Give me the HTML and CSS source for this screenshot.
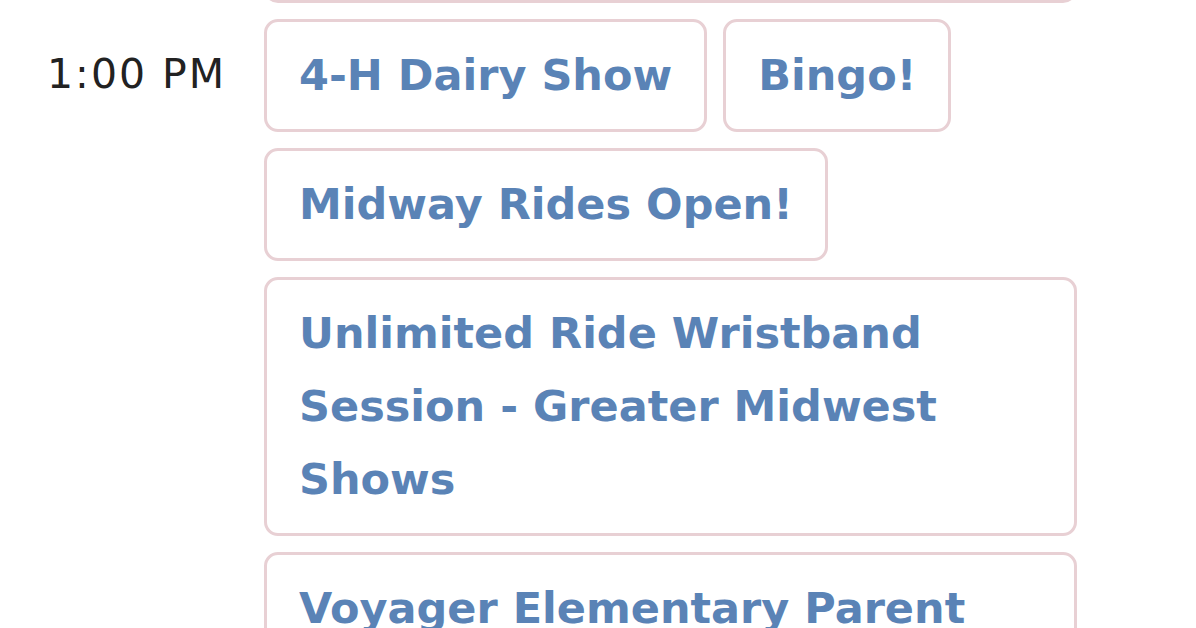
FILE: index.html
```html
<!DOCTYPE html>
<html lang="en">
<head>
    <meta charset="UTF-8">
    <meta name="viewport" content="width=device-width, initial-scale=1.0">
    <title>Schedule</title>
    <link rel="stylesheet" href="styles.css">
</head>
<body>
    <div class="schedule">
        <div class="slot">
            <div class="time">12:00 PM</div>
            <div class="events">
                <div class="event">Open Class Exhibits</div>
            </div>
        </div>
        <div class="slot">
            <div class="time">1:00 PM</div>
            <div class="events">
                <div class="event">4-H Dairy Show</div>
                <div class="event">Bingo!</div>
                <div class="event">Midway Rides Open!</div>
                <div class="event">Unlimited Ride Wristband Session - Greater Midwest Shows</div>
                <div class="event">Voyager Elementary Parent Teacher Organization Food Stand</div>
            </div>
        </div>
    </div>
</body>
</html>
```

FILE: styles.css
```css
body {
    margin: 0;
    background-color: #fff;
    font-family: 'DejaVu Sans', sans-serif;
    overflow: hidden;
}
.schedule {
    margin-top: -110px; /* the previous slot is scrolled mostly off screen */
}
.slot {
    display: flex;
    margin-bottom: 16px;
}
.time {
    width: 217px;
    padding-left: 47px;
    flex-shrink: 0;
    color: #222;
    font-size: 41px;
    letter-spacing: 2px;
    line-height: 73px;
    padding-top: 19px;
    white-space: nowrap;
}
.slot:first-child .time {
    visibility: hidden;
}
.events {
    width: 813px;
    display: flex;
    flex-wrap: wrap;
    gap: 16px;
}
.event {
    border: 3px solid #e8d0d4;
    border-radius: 14px;
    padding: 17px 32px;
    color: #5a83b6;
    font-size: 43px;
    font-weight: 700;
    line-height: 73px;
}
.slot:first-child .event {
    flex: 1;
}
```
